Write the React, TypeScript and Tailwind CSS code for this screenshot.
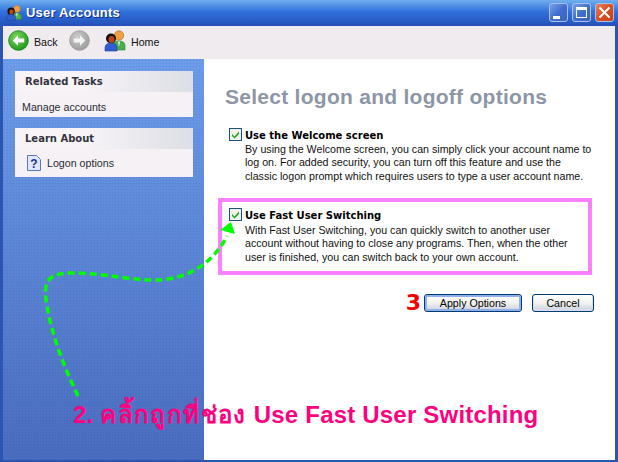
import React from "react";

const Users = ({ s = 22 }: { s?: number }) => (
  <svg width={s} height={s} viewBox="0 0 22 22">
    <circle cx="15" cy="5.5" r="4.7" fill="#f0a040" stroke="#a86a20" strokeWidth=".6" />
    <path d="M9 20v-4q0-5 6-5t6 5v4z" fill="#4caf50" stroke="#2a7a30" strokeWidth=".6" />
    <path d="M14 11.5h2l-1 5z" fill="#fff" />
    <circle cx="7" cy="8.5" r="5" fill="#111" />
    <ellipse cx="7.5" cy="9.5" rx="3" ry="3.4" fill="#b8481c" />
    <path d="M1 21v-3q0-5 6-5t6 5v3z" fill="#2f5fd0" stroke="#1c3a90" strokeWidth=".6" />
  </svg>
);

const NavIcon = ({ back }: { back?: boolean }) => (
  <svg width="21" height="21" viewBox="0 0 22 22">
    <defs>
      <radialGradient id="gg" cx=".4" cy=".35" r=".8"><stop offset="0" stopColor="#7edc5a" /><stop offset="1" stopColor="#0d8a12" /></radialGradient>
      <radialGradient id="gy" cx=".4" cy=".35" r=".8"><stop offset="0" stopColor="#cfcfcf" /><stop offset="1" stopColor="#929292" /></radialGradient>
    </defs>
    <circle cx="11" cy="11" r="10.3" fill={back ? "url(#gg)" : "url(#gy)"} stroke={back ? "#157a18" : "#999"} strokeWidth=".8" />
    {back ? (
      <path d="M5 11l5.5-5.5v3.5H17v4h-6.5v3.5z" fill="#fff" />
    ) : (
      <path d="M17 11l-5.5-5.5v3.5H5v4h6.5v3.5z" fill="#f4f4f4" />
    )}
  </svg>
);

const Check = () => (
  <svg width="13" height="13" viewBox="0 0 13 13" className="shrink-0 mb-[2px]">
    <rect x=".5" y=".5" width="12" height="12" fill="#f1f1ea" stroke="#1c5180" />
    <path d="M3 6l2.5 2.5L10 3.5v2.5L5.5 10.5 3 8z" fill="#21a121" />
  </svg>
);

const Panel = ({ title, children }: { title: string; children: React.ReactNode }) => (
  <div className="w-[178px]">
    <div className="h-[21px] pl-[10px] flex items-center font-bold text-[10px] [font-family:'DejaVu_Sans',sans-serif] text-[#33333f] bg-gradient-to-r from-[#f7f3f7] from-40% to-[#dcdfe6]">{title}</div>
    <div className="bg-[#f5f1f5] text-[#2c2c34]">{children}</div>
  </div>
);

const Option = ({ title, lines }: { title: string; lines: string[] }) => (
  <div>
    <div className="flex items-center gap-[3px] h-[14px]">
      <Check />
      <span className="font-bold text-[10px] [font-family:'DejaVu_Sans',sans-serif] text-black">{title}</span>
    </div>
    <div className="pl-[16px] mt-[1px] leading-[13.33px] text-[#111]">
      {lines.map((l) => (
        <div key={l} className="whitespace-nowrap">{l}</div>
      ))}
    </div>
  </div>
);

const XpButton = ({ w, bold, children }: { w: string; bold?: boolean; children: React.ReactNode }) => (
  <div
    className={`${w} h-[18px] flex items-center justify-center rounded-[3px] border border-[#003c74] text-black bg-gradient-to-b from-[#ffffff] via-[#f2f2ee] to-[#c9cfdf] ${bold ? "shadow-[inset_0_0_0_2px_#8fb0e8]" : "shadow-[inset_0_-1px_0_1px_#d8dcec]"}`}
  >
    {children}
  </div>
);

const WinBtn = ({ children, red }: { children: React.ReactNode; red?: boolean }) => (
  <div
    className={`w-[19px] h-[19px] rounded-[3px] border border-[#a9c0ea] flex items-center justify-center ${red ? "bg-gradient-to-br from-[#e8805a] via-[#d84f20] to-[#c8401c]" : "bg-gradient-to-br from-[#7ba0e6] via-[#3f6fd0] to-[#3c62b8]"}`}
  >
    {children}
  </div>
);

export default function App() {
  return (
    <div className="relative w-[618px] h-[462px] overflow-hidden flex flex-col text-[10.67px] bg-white [font-family:'Liberation_Sans',sans-serif]">
      {/* title bar */}
      <div className="h-[26px] shrink-0 flex items-center pl-[6px] pr-[4px] bg-gradient-to-b from-[#6faeee] via-[#3270dc] via-45% to-[#2450b8]">
        <Users s={16} />
        <span className="ml-[4px] text-white font-bold text-[13px] tracking-[.2px] [text-shadow:1px_1px_0_#0f2f88]">User Accounts</span>
        <div className="ml-auto flex gap-[4px] pb-[1px]">
          <WinBtn>
            <div className="w-[7px] h-[3px] bg-white mt-[9px] mr-[5px]" />
          </WinBtn>
          <WinBtn>
            <div className="w-[11px] h-[11px] border border-white border-t-[3px]" />
          </WinBtn>
          <WinBtn red>
            <svg width="13" height="13" viewBox="0 0 13 13"><path d="M1.5 1.5l10 10M11.5 1.5l-10 10" stroke="#fff" strokeWidth="2" /></svg>
          </WinBtn>
        </div>
      </div>

      <div className="flex-1 min-h-0 flex flex-col border-x-[3px] border-b-[2px] border-[#2a55b0]">
        {/* toolbar */}
        <div className="h-[33px] shrink-0 flex items-center pl-[5px] pb-[4px] bg-[#efebef] text-[#111]">
          <NavIcon back />
          <span className="ml-[5px] w-[23px] pt-[2px]">Back</span>
          <div className="ml-[12px]"><NavIcon /></div>
          <div className="ml-[14px]"><Users /></div>
          <span className="ml-[5px] pt-[2px]">Home</span>
        </div>

        <div className="flex-1 min-h-0 flex">
          {/* sidebar */}
          <div className="w-[201px] shrink-0 pl-[12px] pt-[12px] flex flex-col gap-[11px] bg-[radial-gradient(rgba(30,50,130,.13)_1px,transparent_1px),linear-gradient(#6c9cea,#4a6cbe)] bg-[length:3px_3px,auto]">
            <Panel title="Related Tasks">
              <div className="h-[25px] pl-[7px] pt-[4px] flex items-center">Manage accounts</div>
            </Panel>
            <Panel title="Learn About">
              <div className="h-[28px] pl-[12px] flex items-center gap-[6px]">
                <svg width="14" height="16" viewBox="0 0 14 16">
                  <path d="M.5 .5h9l4 4v11H.5z" fill="#dfe8fb" stroke="#5a78b8" />
                  <text x="7" y="13" textAnchor="middle" fontSize="12" fontWeight="700" fill="#1c2fa0" fontFamily="Liberation Sans">?</text>
                </svg>
                <span>Logon options</span>
              </div>
            </Panel>
          </div>

          {/* main */}
          <div className="flex-1 min-w-0 pl-[14px] pt-[26px]">
            <h1 className="pl-[7px] font-bold text-[21px] leading-[24px] tracking-[.27px] text-[#8d96a8]">Select logon and logoff options</h1>
            <div className="pl-[11px] mt-[19px]">
              <Option
                title="Use the Welcome screen"
                lines={[
                  "By using the Welcome screen, you can simply click your account name to",
                  "log on. For added security, you can turn off this feature and use the",
                  "classic logon prompt which requires users to type a user account name.",
                ]}
              />
            </div>
            <div className="mt-[15px] w-[374px] h-[77px] border-[4px] border-[#ff80ff] pl-[7px] pt-[7px]">
              <Option
                title="Use Fast User Switching"
                lines={[
                  "With Fast User Switching, you can quickly switch to another user",
                  "account without having to close any programs. Then, when the other",
                  "user is finished, you can switch back to your own account.",
                ]}
              />
            </div>
            <div className="mt-[19px] w-[376px] flex items-center justify-end">
              <span className="mr-[3px] text-[#f00000] font-bold text-[22px] leading-[18px] [font-family:'DejaVu_Sans',sans-serif]">3</span>
              <XpButton w="w-[98px]" bold>Apply Options</XpButton>
              <div className="w-[10px]" />
              <XpButton w="w-[62px]">Cancel</XpButton>
            </div>
          </div>
        </div>
      </div>

      {/* annotations */}
      <svg className="absolute left-0 top-0 pointer-events-none" width="618" height="462" viewBox="0 0 618 462">
        <path
          d="M78 396 C68 375 52 340 46 300 C43 280 50 273 72 273 C105 273 125 280 155 280 C190 280 215 260 227 236"
          fill="none" stroke="#00ff00" strokeWidth="3.5" strokeDasharray="7 4"
        />
        <path d="M231 222L220 230L235 234z" fill="#00ff00" />
      </svg>
      <div className="absolute left-[73px] top-[401px] whitespace-nowrap text-[#ff007f] font-bold text-[24px] tracking-[.2px] leading-[28px] [font-family:'Liberation_Sans','Noto_Sans',sans-serif]">
        2. <span className="tracking-[1.4px]">คลิ้กถูกที่ช่อง</span> Use Fast User Switching
      </div>
    </div>
  );
}
